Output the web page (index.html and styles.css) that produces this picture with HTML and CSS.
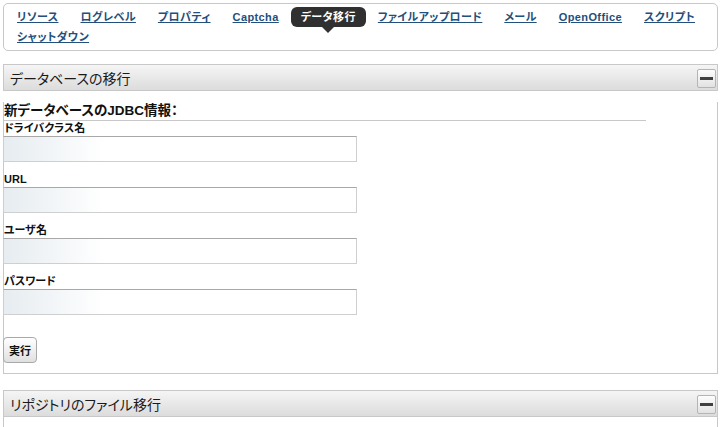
FILE: index.html
```html
<!DOCTYPE html>
<html lang="ja">
<head>
    <meta charset="UTF-8">
    <title>データ移行</title>
    <link rel="stylesheet" href="styles.css">
</head>
<body>
    <nav class="tabs">
        <a href="#" class="tab-link">リソース</a>
        <a href="#" class="tab-link">ログレベル</a>
        <a href="#" class="tab-link">プロパティ</a>
        <a href="#" class="tab-link">Captcha</a>
        <span class="tab-active">データ移行</span>
        <a href="#" class="tab-link">ファイルアップロード</a>
        <a href="#" class="tab-link">メール</a>
        <a href="#" class="tab-link">OpenOffice</a>
        <a href="#" class="tab-link">スクリプト</a>
        <a href="#" class="tab-link">シャットダウン</a>
    </nav>

    <section class="panel">
        <div class="panel-header">
            <h2>データベースの移行</h2>
            <button class="collapse-btn" title="閉じる"><span></span></button>
        </div>
        <div class="panel-body">
            <h3 class="form-title">新データベースのJDBC情報：</h3>
            <div class="field">
                <label>ドライバクラス名</label>
                <input type="text" class="text-input">
            </div>
            <div class="field">
                <label>URL</label>
                <input type="text" class="text-input">
            </div>
            <div class="field">
                <label>ユーザ名</label>
                <input type="text" class="text-input">
            </div>
            <div class="field">
                <label>パスワード</label>
                <input type="password" class="text-input">
            </div>
            <button class="run-btn">実行</button>
        </div>
    </section>

    <section class="panel">
        <div class="panel-header">
            <h2>リポジトリのファイル移行</h2>
            <button class="collapse-btn" title="閉じる"><span></span></button>
        </div>
        <div class="panel-body panel-body-open"></div>
    </section>
</body>
</html>
```

FILE: styles.css
```css
* {
    margin: 0;
    padding: 0;
    box-sizing: border-box;
}

body {
    font-family: 'Liberation Sans', 'Noto Sans CJK JP', sans-serif;
    font-size: 11px;
    color: #111;
    background: white;
    padding: 3px;
}

/* tab navigation */
.tabs {
    display: flex;
    flex-wrap: wrap;
    column-gap: 22px;
    border: 1px solid #c8c8c8;
    border-radius: 5px;
    padding: 3px 13px;
    height: 48px;
    font-feature-settings: "palt";
    letter-spacing: 0.4px;
}

.tab-link,
.tab-active {
    font-weight: bold;
    line-height: 20px;
}

.tab-link {
    color: #234f7c;
    text-decoration: underline;
}

.tab-active {
    position: relative;
    margin: 0 -10px;
    padding: 0 10px;
    background: #303030;
    color: white;
    border-radius: 6px;
}

.tab-active::after {
    content: "";
    position: absolute;
    left: 50%;
    bottom: -6px;
    margin-left: -6px;
    border-left: 6px solid transparent;
    border-right: 6px solid transparent;
    border-top: 6px solid #303030;
}

/* panels */
.panel {
    margin-top: 13px;
}

.panel + .panel {
    margin-top: 16px;
}

.panel-header {
    display: flex;
    align-items: center;
    justify-content: space-between;
    height: 27px;
    border: 1px solid #c8c8c8;
    background: linear-gradient(#f5f5f5, #dcdcdc);
    padding: 0 1px 0 6px;
}

.panel-header h2 {
    font-size: 14px;
    font-weight: normal;
    color: #1a1a1a;
    font-feature-settings: "palt";
}

.collapse-btn {
    width: 19px;
    height: 19px;
    margin-top: 1px;
    border: 1px solid #b4b4b4;
    border-radius: 2px;
    background: linear-gradient(#fdfdfd, #e2e2e2);
    display: flex;
    align-items: center;
    justify-content: center;
}

.collapse-btn span {
    display: block;
    width: 13px;
    height: 3px;
    background: #404040;
}

.panel-body {
    border: 1px solid #c8c8c8;
    border-top: none;
    padding-bottom: 10px;
}

.panel-body-open {
    height: 20px;
    border-bottom: none;
}

.form-title {
    width: 90%;
    margin-top: 11px;
    font-size: 13.5px;
    line-height: 18px;
    border-bottom: 1px solid #c8c8c8;
    font-feature-settings: "palt";
}

.field {
    margin-bottom: 10px;
}

.field label {
    display: block;
    font-weight: bold;
    font-size: 11px;
    line-height: 14px;
    margin-bottom: 1px;
    font-feature-settings: "palt";
}

.text-input {
    display: block;
    width: 354px;
    height: 26px;
    margin-left: -1px;
    border: 1px solid #cfcfcf;
    border-top-color: #a8a8a8;
    background: linear-gradient(90deg, #e6ecf0 0, #ffffff 100px);
    font-size: 12px;
    padding: 0 4px;
}

.run-btn {
    margin-top: 12px;
    margin-left: -1px;
    height: 26px;
    padding: 0 5px;
    border: 1px solid #a9a9a9;
    border-radius: 4px;
    background: linear-gradient(#ffffff, #e0e0e0);
    font-family: 'Liberation Sans', 'Noto Sans CJK JP', sans-serif;
    font-size: 11px;
    font-weight: bold;
    color: #111;
}
```
